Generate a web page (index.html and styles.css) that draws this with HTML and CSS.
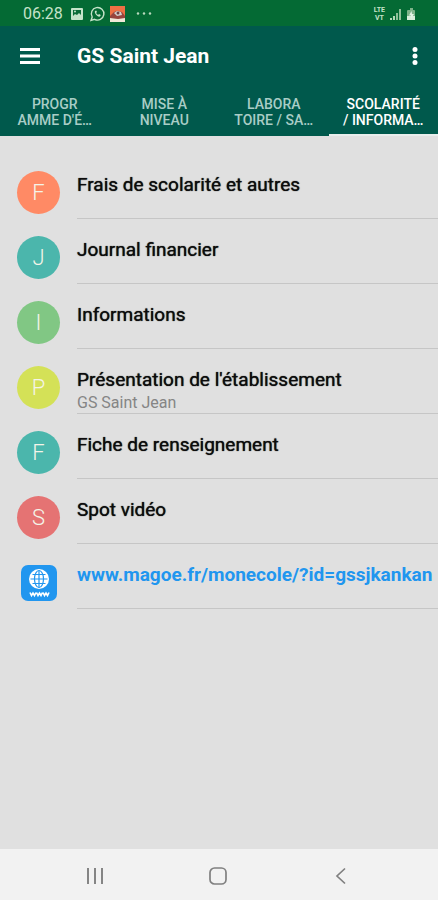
FILE: index.html
```html
<!DOCTYPE html>
<html lang="fr">
<head>
<meta charset="utf-8">
<meta name="viewport" content="width=device-width, initial-scale=1">
<title>GS Saint Jean</title>
<link rel="stylesheet" href="styles.css">
</head>
<body>
<div class="status">
  <span class="clock">06:28</span>
  <svg class="status-left" width="82" height="16" viewBox="0 0 82 16" aria-hidden="true">
    <rect x="1" y="2" width="12" height="12" rx="1" fill="#c5e3c9"/>
    <path d="M3 4h8v5L9 7 7 9 5 8l-2 2z" fill="#0b6b37"/>
    <circle cx="5" cy="5.500" r="1" fill="#c5e3c9"/>
    <path d="M21 14.500l1.200-3.500a6.300 6.300 0 1 1 2.400 2.300z" fill="none" stroke="#c5e3c9" stroke-width="1.400"/>
    <path d="M25 5c-1 2 2.500 6.500 5 5.500l.8-1.500-1.800-1-1 1-2-2 1-1-.8-1.600z" fill="#c5e3c9"/>
    <rect x="40" y="0" width="15" height="16" fill="#ee7044"/>
    <path d="M40 13v-3l4-4 3-1 5 1 3 4v3z" fill="#97443e"/>
    <path d="M44 7l3-2 4 1 1 3-5 1z" fill="#d5d2ce"/>
    <circle cx="48" cy="7" r="1.500" fill="#704146"/>
    <path d="M40 12l8 1 7-1v4H40z" fill="#f0e8d8"/>
    <g fill="#b9dabd"><circle cx="68" cy="7.500" r="1.200"/><circle cx="74" cy="7.500" r="1.200"/><circle cx="80" cy="7.500" r="1.200"/></g>
  </svg>
  <span class="network"><span>LTE</span><span>VT</span></span>
  <svg class="status-right" width="28" height="14" viewBox="0 0 28 14" aria-hidden="true">
    <path d="M1 13v-2h2v2zM4 13V9h2v4z" fill="#b4d8b9"/>
    <path d="M7 13V6h2v7zM10 13V2h2v11z" fill="#8fbf99"/>
    <path d="M18 13V4q0-1 1-1h2V1h3v2h1q1 0 1 1v9z" fill="#7eb38a"/>
    <path d="M18 9h8v4h-8z" fill="#d8eddb"/>
    <path d="M22.500 4L20 8.500h2V12l3-5h-2z" fill="#e4f3e6"/>
  </svg>
</div>
<header class="header">
  <div class="appbar">
    <button class="icon-button" type="button" aria-label="Menu">
      <svg width="22" height="18" viewBox="0 0 22 18"><path d="M1 2.500h20M1 9h20M1 15.500h20" stroke="#fff" stroke-width="2.800"/></svg>
    </button>
    <h1 class="title">GS Saint Jean</h1>
    <button class="icon-button more" type="button" aria-label="Plus">
      <svg width="6" height="20" viewBox="0 0 6 20" fill="#fff"><circle cx="3" cy="3.500" r="2.500"/><circle cx="3" cy="10" r="2.500"/><circle cx="3" cy="16.500" r="2.500"/></svg>
    </button>
  </div>
  <nav class="tabs">
    <button class="tab" type="button">PROGR<br>AMME D'É…</button>
    <button class="tab" type="button">MISE À<br>NIVEAU</button>
    <button class="tab" type="button">LABORA<br>TOIRE / SA…</button>
    <button class="tab active" type="button">SCOLARITÉ<br>/ INFORMA…</button>
  </nav>
</header>
<main class="content">
  <ul class="list">
    <li class="row"><span class="avatar orange">F</span><div class="text">Frais de scolarité et autres</div></li>
    <li class="row"><span class="avatar teal">J</span><div class="text">Journal financier</div></li>
    <li class="row"><span class="avatar green">I</span><div class="text">Informations</div></li>
    <li class="row"><span class="avatar lime">P</span><div class="text">Présentation de l'établissement<small class="sub">GS Saint Jean</small></div></li>
    <li class="row"><span class="avatar teal">F</span><div class="text">Fiche de renseignement</div></li>
    <li class="row"><span class="avatar red">S</span><div class="text">Spot vidéo</div></li>
    <li class="row">
      <span class="avatar">
        <svg width="36" height="36" viewBox="0 0 36 36" aria-hidden="true">
          <rect width="36" height="36" rx="7" fill="#2196ef"/>
          <circle cx="18" cy="14" r="10" fill="#fff"/>
          <g fill="none" stroke="#2196ef" stroke-width="1.200"><path d="M9.500 14h17M18 5.500v17M11.500 9.500h13M11.500 18.500h13"/><ellipse cx="18" cy="14" rx="4.500" ry="8.500"/></g>
          <path d="M9 27.500l1.500 3 1.500-2.500 1.500 2.500 1.500-3M15.500 27.500l1.500 3 1.500-2.500 1.500 2.500 1.500-3M22 27.500l1.500 3 1.500-2.500 1.500 2.500 1.500-3" fill="none" stroke="#fff" stroke-width="1.600"/>
        </svg>
      </span>
      <div class="text"><a class="link" href="#site">www.magoe.fr/monecole/?id=gssjkankan</a></div>
    </li>
  </ul>
</main>
<nav class="navbar">
  <button class="nav-button" type="button" aria-label="Applications récentes"><svg width="18" height="18" viewBox="0 0 18 18"><path d="M2 1v16M9 1v16M16 1v16" stroke="#858585" stroke-width="2"/></svg></button>
  <button class="nav-button" type="button" aria-label="Accueil"><svg width="18" height="18" viewBox="0 0 18 18"><rect x="1" y="1" width="16" height="16" rx="4.500" fill="none" stroke="#808080" stroke-width="1.700"/></svg></button>
  <button class="nav-button" type="button" aria-label="Retour"><svg width="18" height="18" viewBox="0 0 18 18"><path d="M13 1.500L5 9l8 7.500" fill="none" stroke="#808080" stroke-width="1.700"/></svg></button>
</nav>
</body>
</html>
```
FILE: styles.css
```css
* { box-sizing: border-box; }

body {
  margin: 0;
  min-height: 100vh;
  display: flex;
  flex-direction: column;
  background: #e0e0e0;
  color: #0c0c0c;
  font-family: Roboto, "Liberation Sans", sans-serif;
}

button {
  margin: 0;
  padding: 0;
  border: 0;
  background: none;
  color: inherit;
  font: inherit;
}

svg { display: block; }

.status {
  display: flex;
  align-items: center;
  height: 26px;
  padding: 2px 21px 0 23px;
  background: #046a34;
  color: #c5e3c9;
}

.clock { font-size: 16px; line-height: 24px; }
.status-left { margin-left: 7px; }

.network {
  display: flex;
  flex-direction: column;
  align-items: center;
  margin-left: auto;
  margin-right: 4px;
  font-size: 7px;
  line-height: 8px;
  font-weight: 700;
}

.header { background: #00594c; color: #fff; }

.appbar {
  display: flex;
  align-items: center;
  height: 60px;
  padding: 0 20px 0 19px;
}

.title {
  flex: 1;
  margin: 0 0 0 36px;
  font-size: 21px;
  line-height: 28px;
  font-weight: 700;
}

.tabs { display: grid; grid-template-columns: repeat(4, 1fr); }

.tab {
  height: 50px;
  padding: 3px 0 0;
  border-bottom: 2px solid transparent;
  color: #a9cdc6;
  font-size: 14px;
  line-height: 16px;
  font-weight: 500;
  text-align: center;
  white-space: nowrap;
}

.tab.active { color: #fff; border-color: #e8eeec; }

.content { flex: 1; padding-top: 18px; }

.list { margin: 0; padding: 0; list-style: none; }

.row {
  display: flex;
  height: 65px;
  padding-left: 17px;
}

.avatar {
  display: flex;
  align-items: center;
  justify-content: center;
  flex: none;
  width: 43px;
  height: 43px;
  margin: 17px 17px 0 0;
  border-radius: 50%;
  color: #f4f4e8;
  font-size: 22px;
  font-weight: 300;
}

.orange { background: #ff8a65; }
.teal { background: #4bb6ac; }
.green { background: #81c784; }
.lime { background: #d4e157; }
.red { background: #e57373; }

.text {
  flex: 1;
  padding-top: 19px;
  border-bottom: 1px solid #c6c6c6;
  font-size: 19px;
  line-height: 24px;
  font-weight: 400;
  text-shadow: 0 0 1px currentcolor;
  white-space: nowrap;
}

.sub {
  display: block;
  color: #858585;
  font-size: 16px;
  line-height: 22px;
  text-shadow: none;
}

.link {
  color: #2196ef;
  font-weight: 700;
  text-decoration: none;
  text-shadow: none;
}

.navbar {
  display: flex;
  justify-content: center;
  align-items: center;
  gap: 105px;
  height: 51px;
  padding: 3px 2px 0 0;
  background: #f2f2f2;
}
```
